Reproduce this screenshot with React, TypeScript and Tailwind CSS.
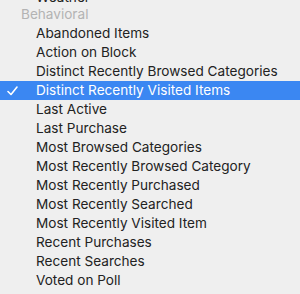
const ITEMS = [
  "Abandoned Items",
  "Action on Block",
  "Distinct Recently Browsed Categories",
  "Distinct Recently Visited Items",
  "Last Active",
  "Last Purchase",
  "Most Browsed Categories",
  "Most Recently Browsed Category",
  "Most Recently Purchased",
  "Most Recently Searched",
  "Most Recently Visited Item",
  "Recent Purchases",
  "Recent Searches",
  "Voted on Poll",
];

const SELECTED = "Distinct Recently Visited Items";

export default function App() {
  return (
    <div
      className="w-[300px] h-[294px] overflow-hidden bg-[#efefef] text-[13.6px]"
      style={{ fontFamily: 'Inter, "Liberation Sans", Arial, sans-serif' }}
    >
      <div className="-mt-[12px] flex flex-col">
        <div className="h-[17px] leading-[19px] pl-[36px] text-[#222]">Weather</div>
        <div className="h-[19px] leading-[19px] pl-[21px] text-[#b3b3b3]">Behavioral</div>
        {ITEMS.map((item) => {
          const on = item === SELECTED;
          return (
            <div
              key={item}
              className={
                on
                  ? "relative h-[19px] leading-[19px] pl-[36px] bg-[#3b87f2] text-white"
                  : "relative h-[19px] leading-[19px] pl-[36px] text-[#222]"
              }
            >
              {on && (
                <svg
                  className="absolute left-[7px] top-[5px]"
                  width="11"
                  height="10"
                  viewBox="0 0 11 10"
                  fill="none"
                >
                  <path d="M1 5.5 L4 8.5 L10 1" stroke="white" strokeWidth="1.6" strokeLinecap="round" strokeLinejoin="round" />
                </svg>
              )}
              {item}
            </div>
          );
        })}
      </div>
    </div>
  );
}
